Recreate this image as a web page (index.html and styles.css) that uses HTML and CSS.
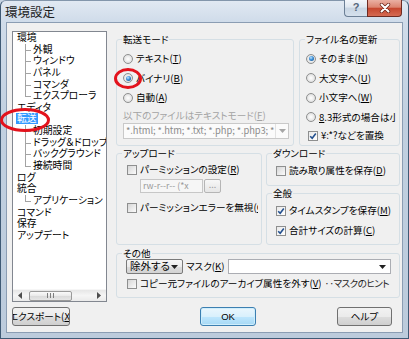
FILE: index.html
```html
<!DOCTYPE html>
<html lang="ja">
<head>
<meta charset="utf-8">
<title>環境設定</title>
<link rel="stylesheet" href="styles.css">
</head>
<body>
<div class="window">
  <div class="titlebar">
    <span class="title">環境設定</span>
    <div class="caption">
      <span class="cbtn help">?</span>
      <span class="cbtn close"><svg width="12" height="10" viewBox="0 0 12 10"><path d="M2.5 1.5 L9.5 8.5 M9.5 1.5 L2.5 8.5" stroke="#6a2318" stroke-width="3.4" stroke-linecap="round"/><path d="M2.5 1.5 L9.5 8.5 M9.5 1.5 L2.5 8.5" stroke="#fff" stroke-width="2" stroke-linecap="round"/></svg></span>
    </div>
  </div>
  <div class="client">
    <div class="main">
      <div class="tree">
        <ul class="nodes">
          <li class="node">環境</li>
          <li class="child">外観</li>
          <li class="child">ウィンドウ</li>
          <li class="child">パネル</li>
          <li class="child">コマンダ</li>
          <li class="child last">エクスプローラ</li>
          <li class="node">エディタ</li>
          <li class="node"><span class="sel">転送</span></li>
          <li class="child">初期設定</li>
          <li class="child">ドラッグ＆ドロップ</li>
          <li class="child">バックグラウンド</li>
          <li class="child last">接続時間</li>
          <li class="node">ログ</li>
          <li class="node">統合</li>
          <li class="child last">アプリケーション</li>
          <li class="node">コマンド</li>
          <li class="node">保存</li>
          <li class="node">アップデート</li>
        </ul>
        <div class="hscroll">
          <span class="sb-btn"><svg width="4" height="7" viewBox="0 0 4 7"><path d="M4 0 L0 3.5 L4 7 Z" fill="#4d4d4d"/></svg></span>
          <span class="sb-thumb"><span class="grip"></span></span>
          <span class="sb-track"></span>
          <span class="sb-btn"><svg width="4" height="7" viewBox="0 0 4 7"><path d="M0 0 L4 3.5 L0 7 Z" fill="#4d4d4d"/></svg></span>
        </div>
      </div>

      <div class="pages">
        <div class="row1">
          <fieldset class="grp g-mode">
            <legend>転送モード</legend>
            <div class="opts">
              <div class="opt"><span class="radio"></span><span>テキスト(<u>T</u>)</span></div>
              <div class="opt"><span class="radio on"></span><span>バイナリ(<u>B</u>)</span></div>
              <div class="opt"><span class="radio"></span><span>自動(<u>A</u>)</span></div>
            </div>
            <div class="dis-label">以下のファイルはテキストモード(<u>F</u>)</div>
            <div class="combo dis">
              <span class="combo-text">*.html; *.htm; *.txt; *.php; *.php3; *</span>
              <span class="combo-btn"><svg width="7" height="4" viewBox="0 0 7 4"><path d="M0 0 H7 L3.5 4 Z" fill="#a6a6a6"/></svg></span>
            </div>
          </fieldset>
          <fieldset class="grp g-name">
            <legend>ファイル名の更新</legend>
            <div class="opts">
              <div class="opt"><span class="radio on"></span><span>そのまま(<u>N</u>)</span></div>
              <div class="opt"><span class="radio"></span><span>大文字へ(<u>U</u>)</span></div>
              <div class="opt"><span class="radio"></span><span>小文字へ(<u>W</u>)</span></div>
              <div class="opt"><span class="radio"></span><span><u>8</u>.3形式の場合は小文字</span></div>
              <div class="opt chk-row"><span class="check on"><svg width="8" height="8" viewBox="0 0 8 8"><path d="M1.2 4.2 L3.2 6.2 L6.8 1.6" fill="none" stroke="#23508f" stroke-width="1.6"/></svg></span><span>¥:*?などを置換</span></div>
            </div>
          </fieldset>
        </div>

        <div class="row2">
          <fieldset class="grp g-up">
            <legend>アップロード</legend>
            <div class="opt c1"><span class="check"></span><span>パーミッションの設定(<u>R</u>)</span></div>
            <div class="perm">
              <span class="perm-input">rw-r--r-- (*x</span>
              <span class="perm-btn">...</span>
            </div>
            <div class="opt c2"><span class="check"></span><span>パーミッションエラーを無視(<u>C</u>)</span></div>
          </fieldset>
          <div class="rcol">
            <fieldset class="grp g-down">
              <legend>ダウンロード</legend>
              <div class="opt c1"><span class="check"></span><span>読み取り属性を保存(<u>D</u>)</span></div>
            </fieldset>
            <fieldset class="grp g-gen">
              <legend>全般</legend>
              <div class="opt c3"><span class="check on"><svg width="8" height="8" viewBox="0 0 8 8"><path d="M1.2 4.2 L3.2 6.2 L6.8 1.6" fill="none" stroke="#23508f" stroke-width="1.6"/></svg></span><span>タイムスタンプを保存(<u>M</u>)</span></div>
              <div class="opt c4"><span class="check on"><svg width="8" height="8" viewBox="0 0 8 8"><path d="M1.2 4.2 L3.2 6.2 L6.8 1.6" fill="none" stroke="#23508f" stroke-width="1.6"/></svg></span><span>合計サイズの計算(<u>C</u>)</span></div>
            </fieldset>
          </div>
        </div>

        <div class="row3">
          <fieldset class="grp g-etc">
            <legend>その他</legend>
            <div class="mask-row">
              <span class="select">除外する<svg width="7" height="4" viewBox="0 0 7 4"><path d="M0 0 H7 L3.5 4 Z" fill="#202020"/></svg></span>
              <span class="mask-lbl">マスク(<u>K</u>)</span>
              <span class="mask-input"><svg width="7" height="4" viewBox="0 0 7 4"><path d="M0 0 H7 L3.5 4 Z" fill="#202020"/></svg></span>
            </div>
            <div class="archive-row">
              <div class="opt c5"><span class="check"></span><span class="clip">コピー元ファイルのアーカイブ属性を外す(<u>V</u>)</span></div>
              <span class="hint">‥マスクのヒント</span>
            </div>
          </fieldset>
        </div>
      </div>
    </div>

    <div class="footer">
      <span class="btn b-export">エクスポート(<u>X</u>)</span>
      <span class="btn b-ok">OK</span>
      <span class="btn b-help">ヘルプ</span>
    </div>
  </div>
</div>

<svg class="mark mark-tree" width="54" height="28" viewBox="0 0 54 28"><ellipse cx="25" cy="13" rx="23.5" ry="10.5" fill="none" stroke="#e3121c" stroke-width="3"/></svg>
<svg class="mark mark-radio" width="32" height="24" viewBox="0 0 32 24"><ellipse cx="15" cy="11.5" rx="12.5" ry="9" fill="none" stroke="#e3121c" stroke-width="3"/></svg>
</body>
</html>
```

FILE: styles.css
```css
* { box-sizing: border-box; }
html, body { margin: 0; padding: 0; }
body {
  width: 409px;
  height: 339px;
  overflow: hidden;
  position: relative;
  background: #c6d4e3;
  font-family: "Noto Sans CJK JP", "Noto Sans", sans-serif;
  font-size: 9.6px;
  line-height: 1.2;
  color: #000;
  font-feature-settings: "palt" 1;
}
u { text-decoration: underline; text-underline-offset: 1px; text-decoration-thickness: 1px; }

.window {
  height: 339px;
  display: flex;
  flex-direction: column;
  background: linear-gradient(180deg, #e1e9f2 0, #d0dcea 20px, #c1d0e0 120px, #bccbdc 100%);
  border: 1px solid #3f5a75;
  border-top-color: #8396ab;
  border-radius: 6px 6px 0 0;
  padding: 0 5px 5px;
}
.titlebar { height: 21px; display: flex; align-items: flex-start; }
.title { font-size: 12.5px; line-height: 22px; margin-left: -1px; color: #1c1c1c; }
.caption { margin-left: auto; margin-right: 1px; margin-top: -1px; display: flex; }
.cbtn { height: 17px; display: flex; align-items: center; justify-content: center; }
.help {
  width: 23px;
  border: 1px solid #6c7f95;
  border-top: none;
  border-right: none;
  border-radius: 0 0 0 4px;
  background: linear-gradient(180deg, #f3f6fa 0, #dfe7f0 45%, #c8d5e3 50%, #d5e0ec 100%);
  font-family: "Liberation Sans", sans-serif;
  font-weight: bold;
  font-size: 11px;
  color: #55677c;
}
.close {
  width: 35px;
  border: 1px solid #6e2b22;
  border-top: none;
  border-radius: 0 0 4px 0;
  background: linear-gradient(180deg, #eab0a3 0, #dc8470 45%, #c6472f 52%, #d56a52 100%);
}

.client {
  flex: 1;
  background: #f0f0f0;
  border: 1px solid #8b9db3;
  padding: 8px 2px 6px 5px;
  display: flex;
  flex-direction: column;
}
.main { height: 271px; display: flex; gap: 9px; }

/* tree */
.tree {
  width: 95px;
  height: 271px;
  flex: none;
  background: #fff;
  border: 1px solid #828790;
  display: flex;
  flex-direction: column;
  overflow: hidden;
}
.nodes { list-style: none; margin: 0; padding: 0; flex: 1; }
.nodes li {
  height: 11.65px;
  line-height: 11.65px;
  font-size: 9.8px;
  white-space: nowrap;
  padding-left: 4px;
}
.nodes li.child {
  padding-left: 20px;
  background:
    linear-gradient(#a3a3a3, #a3a3a3) 12px 0 / 1px 100% no-repeat,
    linear-gradient(#a3a3a3, #a3a3a3) 12px 6px / 6px 1px no-repeat;
}
.nodes li.child.last {
  background:
    linear-gradient(#a3a3a3, #a3a3a3) 12px 0 / 1px 6px no-repeat,
    linear-gradient(#a3a3a3, #a3a3a3) 12px 6px / 6px 1px no-repeat;
}
.sel {
  display: inline-block;
  background: #3399ff;
  color: #fff;
  padding: 0 1px;
  margin-left: -1px;
  line-height: 11px;
}
.hscroll {
  height: 12px;
  display: flex;
  align-items: center;
  background: linear-gradient(180deg, #e6e6e6, #f5f5f5 50%, #eaeaea);
  border-top: 1px solid #f6f6f6;
}
.sb-btn { width: 14px; height: 12px; display: flex; align-items: center; justify-content: center; flex: none; }
.sb-thumb {
  width: 43px;
  height: 10px;
  margin-left: 2px;
  border: 1px solid #9a9a9a;
  border-radius: 2px;
  background: linear-gradient(180deg, #fafafa, #e9e9e9 50%, #dadada 51%, #e6e6e6);
  display: flex;
  align-items: center;
  justify-content: center;
}
.grip {
  width: 7px;
  height: 5px;
  background: repeating-linear-gradient(90deg, #7d7d7d 0 1px, transparent 1px 3px);
}
.sb-track { flex: 1; }

/* pages */
.pages { width: 284px; flex: none; display: flex; flex-direction: column; padding-top: 2px; }
.row1 { display: flex; gap: 5px; height: 113px; }
.row2 { display: flex; gap: 4px; height: 98px; margin-top: 1px; }
.row3 { display: flex; height: 51px; margin-top: 2px; }
.grp {
  margin: 0;
  padding: 0 3px 0 6px;
  border: 1px solid #d5dfe5;
  border-radius: 3px;
  min-width: 0;
}
legend { padding: 0 1px; margin-left: -1px; line-height: 12px; }
.g-mode { width: 178px; height: 113px; }
.g-name { flex: 1; height: 113px; }
.g-up { width: 146px; height: 98px; }
.rcol { flex: 1; display: flex; flex-direction: column; gap: 1px; }
.g-down { height: 39px; }
.g-gen { height: 58px; }
.g-etc { flex: 1; height: 51px; }

.opts { padding-top: 4px; }
.opt {
  display: flex;
  align-items: center;
  gap: 3px;
  height: 19.5px;
  white-space: nowrap;
  overflow: hidden;
}
.chk-row { height: 17px; padding-left: 2px; }
.radio {
  width: 10px;
  height: 10px;
  flex: none;
  border-radius: 50%;
  border: 1px solid #8e8f8f;
  background: radial-gradient(circle at 50% 50%, #ffffff 0, #f1f1f1 35%, #d4d4d4 100%);
  display: flex;
  align-items: center;
  justify-content: center;
}
.radio.on::after {
  content: "";
  width: 5px;
  height: 5px;
  border-radius: 50%;
  background: radial-gradient(circle at 40% 35%, #c2e6ff 0, #3b90d9 45%, #0d3f78 100%);
}
.check {
  width: 10px;
  height: 10px;
  flex: none;
  border: 1px solid #8e8f8f;
  background: linear-gradient(135deg, #d6d6d6, #fbfbfb);
  display: flex;
  align-items: center;
  justify-content: center;
}
.check.on { background: linear-gradient(135deg, #e9e9e9, #ffffff); }

.dis-label { color: #a3a3a3; line-height: 12px; margin-top: 1.5px; white-space: nowrap; }
.combo {
  width: 166px;
  height: 16px;
  margin-top: 2px;
  border: 1px solid #c9c9c9;
  background: #fbfbfb;
  display: flex;
  align-items: center;
}
.combo-text {
  flex: 1;
  min-width: 0;
  overflow: hidden;
  white-space: nowrap;
  color: #8c8c8c;
  font-size: 9.4px;
  letter-spacing: -0.1px;
  padding-left: 2px;
}
.combo-btn {
  width: 13px;
  height: 14px;
  flex: none;
  display: flex;
  align-items: center;
  justify-content: center;
  border-left: 1px solid #e2e2e2;
}

.c1 { height: 18px; margin-top: 2px; padding-left: 4px; }
.perm { display: flex; height: 14px; margin-left: 17px; gap: 1px; }
.perm-input {
  width: 63px;
  border: 1px solid #c7c7c7;
  background: #f6f6f6;
  color: #9a9a9a;
  font-size: 8.8px;
  line-height: 12px;
  padding-left: 2px;
  white-space: nowrap;
  overflow: hidden;
}
.perm-btn {
  width: 17px;
  border: 1px solid #b5b5b5;
  border-radius: 2px;
  background: linear-gradient(#f7f7f7, #e6e6e6);
  color: #a0a0a0;
  line-height: 10px;
  text-align: center;
  font-size: 9px;
}
.c2 { height: 18px; margin-top: 6px; padding-left: 4px; }
.g-down .c1 { margin-top: 3px; padding-left: 3px; }
.c3 { height: 20px; margin-top: 2px; padding-left: 3px; }
.c4 { height: 20px; padding-left: 3px; }

.mask-row { display: flex; align-items: center; height: 15px; gap: 3px; padding-left: 3px; }
.select {
  width: 57px;
  height: 15px;
  flex: none;
  border: 1px solid #7a7a7a;
  border-radius: 2px;
  background: linear-gradient(180deg, #f6f6f6, #ebebeb 50%, #dcdcdc 51%, #d3d3d3);
  display: flex;
  align-items: center;
  justify-content: space-between;
  padding: 0 4px 0 3px;
  font-size: 10.5px;
}
.mask-lbl { white-space: nowrap; }
.mask-input {
  flex: 1;
  height: 15px;
  margin-right: 5px;
  border: 1px solid #abadb3;
  background: #fff;
  display: flex;
  align-items: center;
  justify-content: flex-end;
  padding-right: 4px;
}
.archive-row { display: flex; align-items: center; height: 16px; margin-top: 2px; padding-right: 7px; }
.c5 { height: 16px; padding-left: 4px; width: 200px; flex: none; }
.clip { overflow: hidden; }
.hint { margin-left: auto; white-space: nowrap; color: #1d1d1d; letter-spacing: -0.6px; }

/* footer */
.footer { height: 19px; margin-top: 5px; display: flex; }
.btn {
  height: 19px;
  display: flex;
  align-items: center;
  justify-content: center;
  border: 1px solid #707070;
  border-radius: 3px;
  background: linear-gradient(180deg, #f2f2f2 0, #ebebeb 50%, #dddddd 51%, #cfcfcf 100%);
  white-space: nowrap;
  overflow: hidden;
}
.b-export { width: 58px; }
.b-ok {
  width: 56px;
  margin-left: 130px;
  border-color: #3c7fb1;
  box-shadow: inset 0 0 0 1px #cfeefc;
  background: linear-gradient(180deg, #eaf6fd 0, #d9f0fc 50%, #bee6fd 51%, #a7d9f5 100%);
  font-family: "Liberation Sans", sans-serif;
  font-size: 9.5px;
}
.b-help { width: 55px; margin-left: 81px; }

/* red annotation marks */
.mark { position: absolute; pointer-events: none; }
.mark-tree { left: 0; top: 107px; }
.mark-radio { left: 113px; top: 67px; }
```
